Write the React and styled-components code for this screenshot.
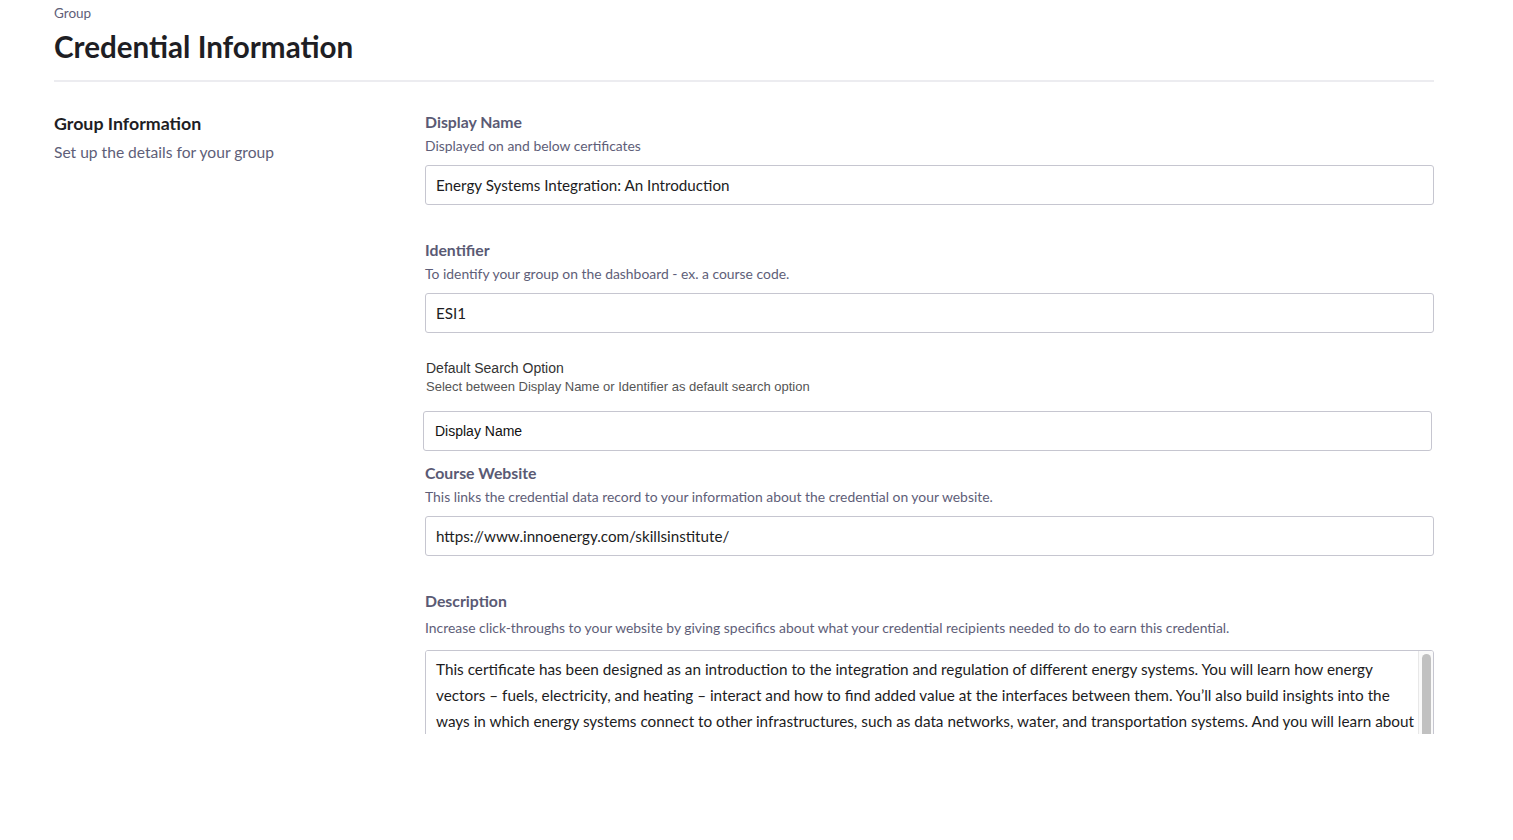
import styled, { createGlobalStyle } from 'styled-components';

const GlobalStyle = createGlobalStyle`
  html, body {
    margin: 0;
    padding: 0;
    background: #ffffff;
  }
  body {
    font-family: "Lato", "Liberation Sans", sans-serif;
    color: #1c1c22;
  }
`;

const fields = [
  {
    label: 'Display Name',
    help: 'Displayed on and below certificates',
    value: 'Energy Systems Integration: An Introduction',
  },
  {
    label: 'Identifier',
    help: 'To identify your group on the dashboard - ex. a course code.',
    value: 'ESI1',
  },
];

const description =
  'This certificate has been designed as an introduction to the integration and regulation of different energy systems. You will learn how energy vectors \u2013 fuels, electricity, and heating \u2013 interact and how to find added value at the interfaces between them. You\u2019ll also build insights into the ways in which energy systems connect to other infrastructures, such as data networks, water, and transportation systems. And you will learn about the policies and markets that shape them, and how to evaluate the economic and environmental performance of integrated energy systems.';

function App() {
  return (
    <Page>
      <GlobalStyle />
      <Header>
        <Crumb>Group</Crumb>
        <Title>Credential Information</Title>
      </Header>
      <Body>
        <Aside>
          <AsideTitle>Group Information</AsideTitle>
          <AsideText>Set up the details for your group</AsideText>
        </Aside>
        <Form>
          {fields.map((f) => (
            <Field key={f.label}>
              <Label>{f.label}</Label>
              <Help>{f.help}</Help>
              <Input defaultValue={f.value} />
            </Field>
          ))}
          <LegacyField>
            <LegacyLabel>Default Search Option</LegacyLabel>
            <LegacyHelp>Select between Display Name or Identifier as default search option</LegacyHelp>
            <Select defaultValue="name">
              <option value="name">Display Name</option>
              <option value="id">Identifier</option>
            </Select>
          </LegacyField>
          <Field>
            <Label>Course Website</Label>
            <Help>This links the credential data record to your information about the credential on your website.</Help>
            <Input defaultValue="https://www.innoenergy.com/skillsinstitute/" />
          </Field>
          <Field>
            <Label>Description</Label>
            <Help $spaced>
              Increase click-throughs to your website by giving specifics about what your credential recipients needed to do to earn this credential.
            </Help>
            <TextBox>
              <TextArea defaultValue={description} />
              <ScrollRail>
                <ScrollThumb />
              </ScrollRail>
            </TextBox>
          </Field>
        </Form>
      </Body>
    </Page>
  );
}

const Page = styled.div`
  height: 734px;
  overflow: hidden;
  padding: 0 79px 0 54px;
`;

const Header = styled.header`
  padding-top: 5px;
  padding-bottom: 15px;
  border-bottom: 2px solid #ececf0;
`;

const Crumb = styled.div`
  font-size: 13.5px;
  line-height: 16px;
  color: #5e5e78;
`;

const Title = styled.h1`
  margin: 8px 0 0;
  font-size: 29.6px;
  line-height: 36px;
  font-weight: 700;
  color: #1e1e24;
`;

const Body = styled.div`
  display: grid;
  grid-template-columns: 371px 1fr;
  padding-top: 30px;
`;

const Aside = styled.div`
  display: flex;
  flex-direction: column;
  gap: 8px;
`;

const AsideTitle = styled.h2`
  margin: 0;
  font-size: 17.8px;
  line-height: 22px;
  font-weight: 700;
  color: #1e1e24;
`;

const AsideText = styled.p`
  margin: 0;
  font-size: 15.6px;
  line-height: 20px;
  color: #5e5e78;
`;

const Form = styled.div`
  display: flex;
  flex-direction: column;
`;

const Field = styled.div`
  display: flex;
  flex-direction: column;
  margin-bottom: 35px;
`;

const Label = styled.label`
  font-size: 15.8px;
  line-height: 20px;
  font-weight: 700;
  color: #5a5a74;
`;

const Help = styled.div`
  font-size: 13.9px;
  line-height: 18px;
  color: #5e5e78;
  margin-top: ${(p) => (p.$spaced ? '8px' : '5px')};
  margin-bottom: ${(p) => (p.$spaced ? '13px' : '10px')};
`;

const Input = styled.input`
  box-sizing: border-box;
  height: 40px;
  width: 100%;
  padding: 0 10px;
  border: 1px solid #c6c6d0;
  border-radius: 3px;
  font-family: inherit;
  font-size: 15.2px;
  color: #1c1c22;
  outline: none;
`;

const LegacyField = styled.div`
  display: flex;
  flex-direction: column;
  margin: -9px 0 12px;
  font-family: "Liberation Sans", Arial, sans-serif;
`;

const LegacyLabel = styled.div`
  padding-left: 1px;
  font-size: 14px;
  line-height: 18px;
  color: #333333;
`;

const LegacyHelp = styled.div`
  padding-left: 1px;
  margin-top: 2px;
  margin-bottom: 16px;
  font-size: 13px;
  line-height: 16px;
  color: #555555;
`;

const Select = styled.select`
  box-sizing: border-box;
  height: 40px;
  width: 100%;
  margin-left: -2px;
  padding: 0 11px;
  border: 1px solid #c6c6d0;
  border-radius: 3px;
  background: #ffffff;
  font-family: "Liberation Sans", Arial, sans-serif;
  font-size: 14px;
  color: #111111;
  appearance: none;
  outline: none;
`;

const TextBox = styled.div`
  display: flex;
  height: 110px;
  border: 1px solid #c6c6d0;
  border-radius: 3px;
  overflow: hidden;
`;

const TextArea = styled.textarea`
  flex: 1;
  min-width: 0;
  padding: 5px 2px 5px 10px;
  border: none;
  font-family: inherit;
  font-size: 15.3px;
  line-height: 26px;
  color: #1c1c22;
  resize: none;
  outline: none;
  overflow: hidden;
`;

const ScrollRail = styled.div`
  flex: 0 0 15px;
  box-sizing: border-box;
  padding: 3px 2px 0 3px;
  border-left: 1px solid #e8e8e8;
  background: #fafafa;
`;

const ScrollThumb = styled.div`
  height: 120px;
  border-radius: 5px;
  background: #c1c1c1;
`;

export default App;
